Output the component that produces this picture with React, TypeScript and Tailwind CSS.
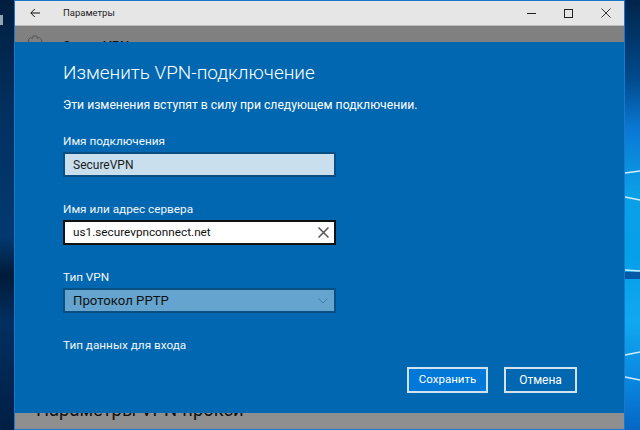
const font = { fontFamily: 'Roboto, "Open Sans", sans-serif' };

function Field({ label, children, mt }: { label: string; children: React.ReactNode; mt: string }) {
  return (
    <div className={mt}>
      <div className="text-[11.75px] leading-[16px] text-[#f2f7fb]">{label}</div>
      <div className="mt-[3px]">{children}</div>
    </div>
  );
}

export default function App() {
  return (
    <div className="w-[640px] h-[430px] overflow-hidden flex bg-[#012a55]" style={font}>
      {/* left wallpaper */}
      <div className="w-[14px] h-full bg-[linear-gradient(180deg,#011e3f_0%,#01305f_25%,#013a70_55%,#001b3a_64%,#012f60_75%,#001f45_100%)] relative">
        <div className="absolute left-0 top-[15px] w-[3px] h-[10px] bg-[#b8c4cc] opacity-80" />
      </div>

      {/* window */}
      <div className="w-[611px] h-full border-x border-[#1a78cc] flex flex-col pt-px bg-[#1a78cc]">
        <div className="h-[25px] shrink-0 bg-[#e6e6e6] flex items-center border-b border-[#bdbdbd]">
          <div className="w-[48px] pl-[15px] flex">
            <svg width="10" height="10" viewBox="0 0 10 10" fill="none" stroke="#111" strokeWidth="1">
              <path d="M10 5H1M4.800 1 .8 5l4 4" />
            </svg>
          </div>
          <span className="text-[9.5px] text-[#222]">Параметры</span>
          <div className="ml-auto flex items-center">
            <div className="w-[37px] flex justify-center">
              <div className="w-[9px] h-px bg-[#222]" />
            </div>
            <div className="w-[37px] flex justify-center">
              <div className="w-[9px] h-[9px] border border-[#222]" />
            </div>
            <div className="w-[37px] flex justify-center">
              <svg width="10" height="10" viewBox="0 0 10 10" stroke="#333" strokeWidth="1">
                <path d="M.5.5l9 9M9.5.5l-9 9" />
              </svg>
            </div>
          </div>
        </div>

        <div className="h-[16px] shrink-0 bg-[#808080] overflow-hidden flex pl-[11px] pt-[9px] gap-[19px]">
          <svg width="18" height="18" viewBox="0 0 18 18" fill="none" stroke="#555" className="shrink-0">
            <path d="M7 1h4l.5 2.5 2-1 2.5 2.5-1 2L17 7.5v3l-2 .5 1 2-2.5 2.5-2-1L11 17H7l-.5-2.5-2 1L2 13l1-2-2-.5v-3L3 7 2 5l2.500-2.500 2 1z" />
          </svg>
          <span className="text-[13px] font-medium leading-[16px] text-[#111] mt-[3px]">SecureVPN</span>
        </div>

        <div className="h-[371px] shrink-0 bg-[#0067b0] px-[48px] relative">
          <h1 className="pt-[17px] text-[18.9px] leading-[28px] font-light text-white">Изменить VPN-подключение</h1>
          <p className="mt-[10px] text-[12.2px] leading-[16px] text-white">
            Эти изменения вступят в силу при следующем подключении.
          </p>

          <Field label="Имя подключения" mt="mt-[20px]">
            <div className="w-[273px] h-[25px] bg-[#c9dfee] border-2 border-[#0b4f82] flex items-center pl-[8px] text-[12px] text-[#1c1c1c]">
              SecureVPN
            </div>
          </Field>

          <Field label="Имя или адрес сервера" mt="mt-[24px]">
            <div className="w-[273px] h-[25px] bg-white border-2 border-[#111] flex items-center pl-[8px] pr-[5px] text-[11.75px] text-[#111]">
              us1.securevpnconnect.net
              <svg className="ml-auto" width="11" height="11" viewBox="0 0 11 11" stroke="#555" strokeWidth="1.500">
                <path d="M.5.5l10 10M10.500.5l-10 10" />
              </svg>
            </div>
          </Field>

          <Field label="Тип VPN" mt="mt-[24px]">
            <div className="w-[273px] h-[25px] bg-[#66a4d0] border-2 border-[#0b4f82] flex items-center pl-[8px] pr-[6px] text-[13.2px] text-[#111]">
              Протокол PPTP
              <svg className="ml-auto" width="10" height="6" viewBox="0 0 10 6" fill="none" stroke="#3f7ca8">
                <path d="M.5.500 5 5l4.500-4.500" />
              </svg>
            </div>
          </Field>

          <div className="mt-[24px] text-[11.75px] leading-[16px] text-[#f2f7fb]">Тип данных для входа</div>

          <div className="absolute right-[47px] top-[325px] flex gap-[16px]">
            <button className="w-[81px] h-[26px] bg-[#0078d7] border-2 border-[#cfe3f2] text-[11.5px] text-white">Сохранить</button>
            <button className="w-[73px] h-[26px] bg-[#0067b0] border-2 border-[#cfe3f2] text-[12px] text-white">Отмена</button>
          </div>
        </div>

        <div className="h-[16px] shrink-0 bg-[#8f8f8f] overflow-hidden pl-[21px]">
          <div className="text-[18.4px] leading-[20px] -mt-[13px] text-[#111] font-normal">Параметры VPN-прокси</div>
        </div>
      </div>

      {/* right wallpaper */}
      <div className="flex-1 h-full relative bg-[linear-gradient(180deg,#01244a_0%,#014a8c_18%,#0a78d4_30%,#0aa0e8_45%,#04a0ea_60%,#10a8f0_75%,#0a88e0_88%,#0567c4_100%)]">
        <svg className="absolute inset-0" width="15" height="430" viewBox="0 0 15 430" fill="none">
          <path d="M0 173 15 171M0 197 15 200M0 270 15 271M0 355 15 352M0 377 15 380" stroke="#cfeefc" strokeWidth="1.500" />
          <rect x="0" y="272" width="15" height="7" fill="#0359a8" />
        </svg>
      </div>
    </div>
  );
}
